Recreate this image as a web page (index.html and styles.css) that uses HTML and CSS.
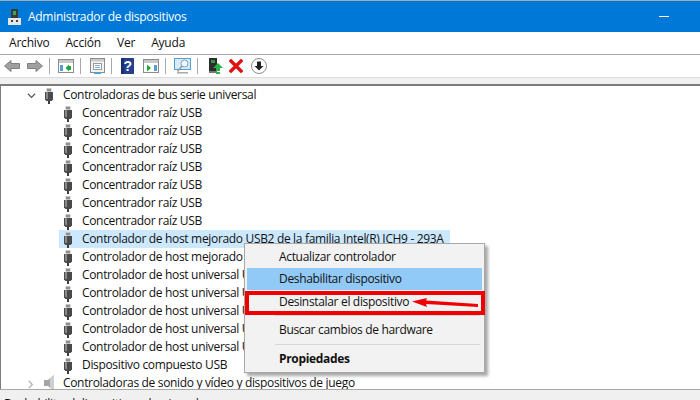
FILE: index.html
```html
<!DOCTYPE html>
<html lang="es">
<head>
<meta charset="utf-8">
<title>Administrador de dispositivos</title>
<link rel="stylesheet" href="styles.css">
</head>
<body>
<svg class="defs" width="0" height="0" aria-hidden="true">
  <symbol id="usb" viewBox="0 0 10 16">
    <rect x="2.500" y="0" width="5" height="4" fill="#c4c4c4"/>
    <rect x="3.500" y="1" width="1" height="2" fill="#5a5a5a"/>
    <rect x="5.500" y="1" width="1" height="2" fill="#5a5a5a"/>
    <path d="M1 4h8v7.500l-1.500 1.500h-5l-1.500-1.500z" fill="#4a4a4a"/>
    <rect x="2" y="4" width="2" height="7" fill="#8a8a8a"/>
    <rect x="4" y="13" width="2" height="3" fill="#3c3c3c"/>
  </symbol>
</svg>
<div class="window">
  <header class="titlebar">
    <svg class="title-icon" width="13" height="16" viewBox="0 0 13 16">
      <rect x="3" y="0" width="7" height="9" fill="#3a3a3a"/>
      <rect x="5" y="2" width="3" height="4" fill="#3fa35b"/>
      <rect x="0" y="9" width="13" height="7" fill="#e6e6e6"/>
      <rect x="3" y="11" width="2" height="2" fill="#444"/>
      <rect x="8" y="11" width="2" height="2" fill="#444"/>
    </svg>
    <span class="title-text">Administrador de dispositivos</span>
  </header>
  <nav class="menubar">
    <span>Archivo</span><span>Acción</span><span>Ver</span><span>Ayuda</span>
  </nav>
  <div class="toolbar">
    <svg class="tool" width="16" height="16" viewBox="0 0 16 16"><path d="M0.500 8L7 2.500V5.500H15.500V10.500H7V13.500Z" fill="#a0a0a0" stroke="#808080"/></svg>
    <svg class="tool tool-next" width="16" height="16" viewBox="0 0 16 16"><path d="M15.500 8L9 2.500V5.500H.5V10.500H9V13.500Z" fill="#a0a0a0" stroke="#808080"/></svg>
    <span class="sep sep-a"></span>
    <svg class="tool" width="16" height="14" viewBox="0 0 16 14"><rect x=".5" y=".5" width="15" height="13" fill="#fff" stroke="#8c8c8c"/><rect x="1" y="1" width="14" height="3" fill="#c9c9c9"/><rect x="2" y="6" width="3" height="6" fill="#5b9bd5"/><path d="M11 5.500V12.500L7.500 9Z" fill="#21a63b"/><rect x="11" y="7" width="2" height="4" fill="#21a63b"/></svg>
    <span class="sep sep-b"></span>
    <svg class="tool" width="15" height="16" viewBox="0 0 15 16"><rect x=".5" y=".5" width="14" height="14" fill="#f2f2f2" stroke="#8c8c8c"/><rect x="1" y="1" width="13" height="2.500" fill="#c9c9c9"/><rect x="3.500" y="5.500" width="8" height="6" fill="#fff" stroke="#9a9a9a"/><path d="M5 7.500h5M5 9.500h5" stroke="#7fa8c9"/><rect x="4" y="14" width="7" height="2" fill="#4aa3df"/></svg>
    <span class="sep sep-c"></span>
    <svg class="tool tool-help" width="13" height="16" viewBox="0 0 13 16"><rect width="13" height="16" fill="#23408f"/><rect x="0" y="0" width="3" height="16" fill="#1a2f73"/></svg>
    <span class="help-mark">?</span>
    <svg class="tool tool-run" width="16" height="14" viewBox="0 0 16 14"><rect x=".5" y=".5" width="15" height="13" fill="#fff" stroke="#8c8c8c"/><rect x="1" y="1" width="14" height="3" fill="#c9c9c9"/><rect x="11" y="6" width="3" height="6" fill="#5b9bd5"/><path d="M4 5.500V12.500L8 9Z" fill="#21a63b"/></svg>
    <span class="sep sep-d"></span>
    <svg class="tool" width="17" height="16" viewBox="0 0 17 16"><rect x=".5" y=".5" width="16" height="11" fill="#d6ecfb" stroke="#4d9fd6"/><rect x="3" y="14" width="11" height="1.500" fill="#aaa"/><circle cx="10.500" cy="5.500" r="3.500" fill="#eef7fd" stroke="#8aa0ae"/><path d="M8 8L3.500 13.500" stroke="#999" stroke-width="1.500"/></svg>
    <span class="sep sep-e"></span>
    <svg class="tool tool-driver" width="15" height="16" viewBox="0 0 15 16"><rect x="1" y="0" width="8" height="13" fill="#2c2c2c"/><rect x="3" y="2" width="4" height="3" fill="#2e9c4a"/><rect x="1" y="13" width="8" height="2" fill="#777"/><path d="M10 5l5 5h-3v3h-4v-3H5z" fill="#27b24a"/><rect x="8" y="14" width="4" height="2" fill="#27b24a"/></svg>
    <svg class="tool tool-x" width="14" height="14" viewBox="0 0 14 14"><path d="M2 2L12 12M12 2L2 12" stroke="#dc1414" stroke-width="3.400" stroke-linecap="square"/></svg>
    <svg class="tool tool-down" width="16" height="16" viewBox="0 0 16 16"><circle cx="8" cy="8" r="7.500" fill="#fff" stroke="#8c8c8c"/><path d="M6 3.500h4V8h2.500L8 12.500 3.500 8H6z" fill="#222"/></svg>
  </div>
  <div class="strip"></div>
  <main class="tree">
    <div class="row level-1"><svg class="chev" width="9" height="6" viewBox="0 0 10 6"><path d="M1 .5L5 4.500L9 .5" fill="none" stroke="#555" stroke-width="1.300"/></svg><svg class="usb" width="10" height="16"><use href="#usb"/></svg><span>Controladoras de bus serie universal</span></div>
    <div class="row level-2"><svg class="usb" width="10" height="16"><use href="#usb"/></svg><span>Concentrador raíz USB</span></div>
    <div class="row level-2"><svg class="usb" width="10" height="16"><use href="#usb"/></svg><span>Concentrador raíz USB</span></div>
    <div class="row level-2"><svg class="usb" width="10" height="16"><use href="#usb"/></svg><span>Concentrador raíz USB</span></div>
    <div class="row level-2"><svg class="usb" width="10" height="16"><use href="#usb"/></svg><span>Concentrador raíz USB</span></div>
    <div class="row level-2"><svg class="usb" width="10" height="16"><use href="#usb"/></svg><span>Concentrador raíz USB</span></div>
    <div class="row level-2"><svg class="usb" width="10" height="16"><use href="#usb"/></svg><span>Concentrador raíz USB</span></div>
    <div class="row level-2"><svg class="usb" width="10" height="16"><use href="#usb"/></svg><span>Concentrador raíz USB</span></div>
    <div class="row level-2 selected"><svg class="usb" width="10" height="16"><use href="#usb"/></svg><span>Controlador de host mejorado USB2 de la familia Intel(R) ICH9 - 293A</span></div>
    <div class="row level-2"><svg class="usb" width="10" height="16"><use href="#usb"/></svg><span class="under-menu">Controlador de host mejorado USB2 de la familia Intel(R) ICH9 - 293C</span></div>
    <div class="row level-2"><svg class="usb" width="10" height="16"><use href="#usb"/></svg><span class="under-menu">Controlador de host universal USB de la familia Intel(R) ICH9</span></div>
    <div class="row level-2"><svg class="usb" width="10" height="16"><use href="#usb"/></svg><span class="under-menu">Controlador de host universal USB de la familia Intel(R) ICH9</span></div>
    <div class="row level-2"><svg class="usb" width="10" height="16"><use href="#usb"/></svg><span class="under-menu">Controlador de host universal USB de la familia Intel(R) ICH9</span></div>
    <div class="row level-2"><svg class="usb" width="10" height="16"><use href="#usb"/></svg><span class="under-menu">Controlador de host universal USB de la familia Intel(R) ICH9</span></div>
    <div class="row level-2"><svg class="usb" width="10" height="16"><use href="#usb"/></svg><span class="under-menu">Controlador de host universal USB de la familia Intel(R) ICH9</span></div>
    <div class="row level-2"><svg class="usb" width="10" height="16"><use href="#usb"/></svg><span>Dispositivo compuesto USB</span></div>
    <div class="row level-1"><svg class="chev" width="6" height="9" viewBox="0 0 6 10"><path d="M.5 1L4.500 5L.5 9" fill="none" stroke="#aaa" stroke-width="1.300"/></svg><svg class="speaker" width="12" height="16" viewBox="0 0 12 16"><path d="M0 5h4l6-5v16l-6-5H0z" fill="#a5a5a5"/><path d="M6 3l4-3v16l-4-3z" fill="#cfcfcf"/></svg><span>Controladoras de sonido y vídeo y dispositivos de juego</span></div>
  </main>
  <footer class="status">Deshabilita el dispositivo seleccionado.</footer>
  <div class="context-menu">
    <div class="item">Actualizar controlador</div>
    <div class="item item-hover">Deshabilitar dispositivo</div>
    <div class="item item-target">Desinstalar el dispositivo</div>
    <div class="divider divider-first"></div>
    <div class="item item-buscar">Buscar cambios de hardware</div>
    <div class="divider"></div>
    <div class="item item-bold">Propiedades</div>
  </div>
  <div class="callout"></div>
  <svg class="arrow" width="66" height="10" viewBox="0 0 66 10"><path d="M0 3.500L15 0L14 2.500L66 6V9L14 6L15 9Z" fill="#f00000"/></svg>
</div>
</body>
</html>
```

FILE: styles.css
```css
* { box-sizing: border-box; }
html, body { margin: 0; padding: 0; background: #fff; }
.defs { position: absolute; }
.window {
  position: relative;
  width: 700px;
  height: 400px;
  overflow: hidden;
  display: flex;
  flex-direction: column;
  font-family: "Open Sans", "Noto Sans", sans-serif;
  font-size: 12px;
  letter-spacing: -0.33px;
  color: #111;
  background: #fff;
}
.titlebar {
  flex: none;
  height: 31px;
  margin-top: 1px;
  background: #0078d7;
  color: #fff;
  display: flex;
  align-items: center;
  padding: 0 0 0 8px;
  box-shadow: 0 -1px 0 #a9a9a9;
  letter-spacing: -0.28px;
}
.title-icon { flex: none; margin-right: 7px; }
.title-text { font-size: 12px; flex: 1; }
.titlebar::after { content: ""; width: 10px; height: 1px; background: #fff; margin-right: 31px; }
.menubar {
  flex: none;
  height: 20px;
  display: flex;
  align-items: center;
  gap: 16px;
  padding: 0 0 2px 9px;
  border-bottom: 1px solid #ababab;
  box-sizing: content-box;
  letter-spacing: -0.2px;
}
.toolbar {
  flex: none;
  height: 22px;
  display: flex;
  align-items: center;
  padding-left: 4px;
  position: relative;
}
.tool { flex: none; }
.tool-next { margin-left: 7px; }
.sep { flex: none; width: 1px; height: 16px; background: #a9a9a9; }
.sep-a { margin: 0 8px 0 6px; }
.sep-b { margin: 0 9px 0 6px; }
.sep-c { margin: 0 9px 0 6px; }
.sep-d { margin: 0 8px 0 6px; }
.sep-e { margin: 0 10px 0 6px; }
.tool-run { margin-left: 9px; }
.help-mark {
  position: absolute;
  left: 122px;
  top: 2px;
  width: 11px;
  text-align: center;
  color: #fff;
  font: bold 14px/18px "Liberation Sans", sans-serif;
}
.tool-x { margin-left: 6px; }
.tool-down { margin-left: 8px; }
.strip {
  flex: none;
  height: 9px;
  background: #f0f0f0;
  border-top: 1px solid #dcdcdc;
  border-bottom: 2px solid #7c7c7c;
}
.tree {
  flex: 1;
  min-height: 0;
  border-left: 1px solid #7c7c7c;
  overflow: hidden;
}
.row {
  height: 18px;
  display: flex;
  align-items: center;
  white-space: nowrap;
  position: relative;
}
.row span { position: relative; top: -1px; }
.row .under-menu { flex: none; width: 162px; overflow: hidden; }
.usb { flex: none; margin-top: 2px; }
.level-1 .chev { flex: none; position: absolute; left: 26px; top: 7px; }
.level-1 .usb { margin-left: 43px; margin-right: 9px; }
.level-1 .speaker { flex: none; margin-left: 43px; margin-right: 7px; }
.level-2 { padding-left: 62px; }
.level-2 .usb { margin-right: 9px; }
.selected { margin-left: 58px; padding-left: 4px; width: 391px; background: #cce8ff; }
.level-1:last-child .chev { left: 27px; top: 6px; }
.status {
  flex: none;
  height: 11px;
  background: #f0f0f0;
  border-top: 1px solid #a9a9a9;
  padding: 6px 0 0 4px;
  overflow: hidden;
  line-height: 16px;
}
.context-menu {
  position: absolute;
  left: 244px;
  top: 243px;
  width: 241px;
  height: 130px;
  background: #f2f2f2;
  border: 1px solid #a8a8a8;
  box-shadow: 3px 3px 3px rgba(0, 0, 0, .35);
  padding: 2px;
}
.item { height: 22px; line-height: 22px; padding-left: 32px; }
.item-hover { background: #91c9f7; }
.item-target { margin-top: 1px; }
.item-bold { font-weight: 700; }
.divider { height: 1px; background: #d7d7d7; margin: 3px 2px 3px 28px; }
.divider-first { margin-top: 2px; }
.callout {
  position: absolute;
  left: 245px;
  top: 291px;
  width: 240px;
  height: 24px;
  border: 4px solid #f00000;
}
.arrow { position: absolute; left: 412px; top: 298px; }
```
